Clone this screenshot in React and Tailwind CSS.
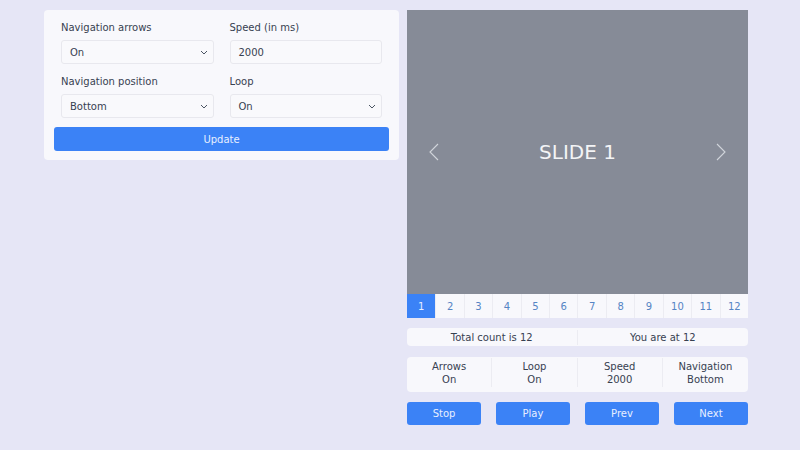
import React from "react";

const font = { fontFamily: '"DejaVu Sans", sans-serif' };

function Chevron() {
  return (
    <svg width="8" height="5" viewBox="0 0 8 5" fill="none">
      <path d="M1 1l3 3 3-3" stroke="#4b5563" strokeWidth="1" />
    </svg>
  );
}

function Field({ label, children }) {
  return (
    <div className="flex flex-col">
      <div className="text-[10px] leading-[14px] text-[#374151] mb-[5px] mt-[4px]">{label}</div>
      {children}
    </div>
  );
}

function Select({ value }) {
  return (
    <div className="h-[24px] rounded-[3px] border border-[#e8e8ee] bg-[#f9f9fc] flex items-center justify-between pl-[8px] pr-[5px] text-[10px] text-[#374151]">
      <span>{value}</span>
      <Chevron />
    </div>
  );
}

function Input({ value }) {
  return (
    <div className="h-[24px] rounded-[3px] border border-[#e8e8ee] bg-[#f9f9fc] flex items-center pl-[8px] text-[10px] text-[#374151]">
      {value}
    </div>
  );
}

export default function App() {
  const pages = Array.from({ length: 12 }, (_, i) => i + 1);
  return (
    <div style={font} className="w-[800px] h-[450px] bg-[#e6e6f6] flex items-start gap-[8px] pl-[44px] pt-[10px]">
      <div className="w-[355px] bg-[#f8f8fc] rounded-[4px] px-[10px] pt-[7px] pb-[9px]">
        <div className="grid grid-cols-2 gap-x-[16px] gap-y-[7px] px-[7px]">
          <Field label="Navigation arrows"><Select value="On" /></Field>
          <Field label="Speed (in ms)"><Input value="2000" /></Field>
          <Field label="Navigation position"><Select value="Bottom" /></Field>
          <Field label="Loop"><Select value="On" /></Field>
        </div>
        <div className="mt-[9px] h-[24px] rounded-[3px] bg-[#3b82f6] flex items-center justify-center text-[10px] text-[#e8efff]">
          Update
        </div>
      </div>

      <div className="w-[341px] flex flex-col">
        <div className="h-[284px] bg-[#868b97] flex items-center justify-between px-[21px] text-[#f3f4f6]">
          <svg width="12" height="18" viewBox="0 0 12 18" fill="none">
            <path d="M10 1L2 9l8 8" stroke="#d1d5db" strokeWidth="1.1" />
          </svg>
          <div className="text-[20px]">SLIDE 1</div>
          <svg width="12" height="18" viewBox="0 0 12 18" fill="none">
            <path d="M2 1l8 8-8 8" stroke="#d1d5db" strokeWidth="1.1" />
          </svg>
        </div>
        <div className="h-[24px] grid grid-cols-12 bg-[#f8f8fc]">
          {pages.map((p) => (
            <div
              key={p}
              className={
                p === 1
                  ? "flex items-center justify-center text-[10px] bg-[#3b82f6] text-[#e8efff]"
                  : "flex items-center justify-center text-[10px] text-[#5584c4] border-l border-[#ececf2]"
              }
            >
              {p}
            </div>
          ))}
        </div>
        <div className="mt-[10px] h-[18px] rounded-[4px] bg-[#f8f8fc] grid grid-cols-2 text-[10px] text-[#374151]">
          <div className="flex items-center justify-center border-r border-[#ececf2] my-[2px]">Total count is 12</div>
          <div className="flex items-center justify-center">You are at 12</div>
        </div>
        <div className="mt-[11px] h-[35px] rounded-[4px] bg-[#f8f8fc] grid grid-cols-4 text-[10px] leading-[13px] text-[#374151] pt-[1px] pb-[5px]">
          {[["Arrows", "On"], ["Loop", "On"], ["Speed", "2000"], ["Navigation", "Bottom"]].map(([a, b], i) => (
            <div key={a} className={"flex flex-col items-center justify-center " + (i < 3 ? "border-r border-[#ececf2]" : "")}>
              <span>{a}</span>
              <span>{b}</span>
            </div>
          ))}
        </div>
        <div className="mt-[10px] flex justify-between">
          {["Stop", "Play", "Prev", "Next"].map((t) => (
            <div key={t} className="w-[74px] h-[23px] rounded-[3px] bg-[#3b82f6] flex items-center justify-center text-[10px] text-[#e8efff]">
              {t}
            </div>
          ))}
        </div>
      </div>
    </div>
  );
}
